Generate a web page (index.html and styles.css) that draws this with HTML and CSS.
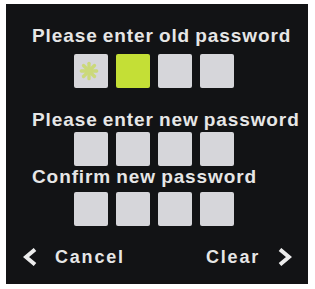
FILE: index.html
```html
<!DOCTYPE html>
<html lang="en">

<head>
  <title>Change Password</title>
  <link rel="stylesheet" href="styles.css">
</head>

<body>
  <div class="panel">
    <div class="section old">
      <div class="label">Please enter old password</div>
      <div class="pins">
        <div class="pin">
          <svg class="spark" viewBox="0 0 20 20" width="22" height="22">
            <g stroke="#c8da5a" stroke-width="3" stroke-linecap="round" opacity="0.75">
              <line x1="10" y1="3" x2="10" y2="17" />
              <line x1="3" y1="10" x2="17" y2="10" />
              <line x1="5" y1="5" x2="15" y2="15" />
              <line x1="15" y1="5" x2="5" y2="15" />
            </g>
          </svg>
        </div>
        <div class="pin active"></div>
        <div class="pin"></div>
        <div class="pin"></div>
      </div>
    </div>

    <div class="section new">
      <div class="label">Please enter new password</div>
      <div class="pins">
        <div class="pin"></div>
        <div class="pin"></div>
        <div class="pin"></div>
        <div class="pin"></div>
      </div>
    </div>

    <div class="section confirm">
      <div class="label">Confirm new password</div>
      <div class="pins">
        <div class="pin"></div>
        <div class="pin"></div>
        <div class="pin"></div>
        <div class="pin"></div>
      </div>
    </div>

    <div class="footer">
      <div class="nav">
        <svg class="chevron" viewBox="0 0 14 18" width="14" height="18">
          <polyline points="12,1.5 3,9 12,16.5" fill="none" stroke="#ececec" stroke-width="4" />
        </svg>
        <span class="nav-text">Cancel</span>
      </div>
      <div class="nav">
        <span class="nav-text">Clear</span>
        <svg class="chevron" viewBox="0 0 14 18" width="14" height="18">
          <polyline points="2,1.5 11,9 2,16.5" fill="none" stroke="#ececec" stroke-width="4" />
        </svg>
      </div>
    </div>
  </div>
</body>

</html>
```

FILE: styles.css
```css
body {
  margin: 0;
  background-color: #ffffff;
}

.panel {
  margin: 4px 0 0 6px;
  width: 302px;
  height: 280px;
  box-sizing: border-box;
  padding-top: 22px;
  background-color: #121315;
  font-family: 'Liberation Sans', Arial, sans-serif;
  font-weight: bold;
  font-size: 19px;
  color: #e6e6e6;
  letter-spacing: 0.9px;
  word-spacing: -1px;
}

.section {
  padding-left: 26px;
}

.label {
  line-height: 20px;
  white-space: nowrap;
}

.pins {
  display: flex;
  gap: 8px;
  margin-left: 42px;
}

.pin {
  width: 34px;
  height: 34px;
  border-radius: 2px;
  background-color: #d6d6da;
  display: flex;
  align-items: center;
  justify-content: center;
}

.pin.active {
  background-color: #c4df36;
}

.spark {
  margin-left: -5px;
}

.old .pins {
  margin-top: 8px;
}

.new .label {
  margin-top: 22px;
}

.new .pins {
  margin-top: 2px;
}

.confirm .label {
  margin-top: 1px;
}

.confirm .pins {
  margin-top: 5px;
}

.footer {
  display: flex;
  justify-content: space-between;
  margin-top: 21px;
  padding: 0 16px 0 17px;
  line-height: 20px;
}

.nav {
  display: flex;
  align-items: center;
  gap: 18px;
}

.nav-text {
  font-size: 18px;
  letter-spacing: 1.8px;
}
```
